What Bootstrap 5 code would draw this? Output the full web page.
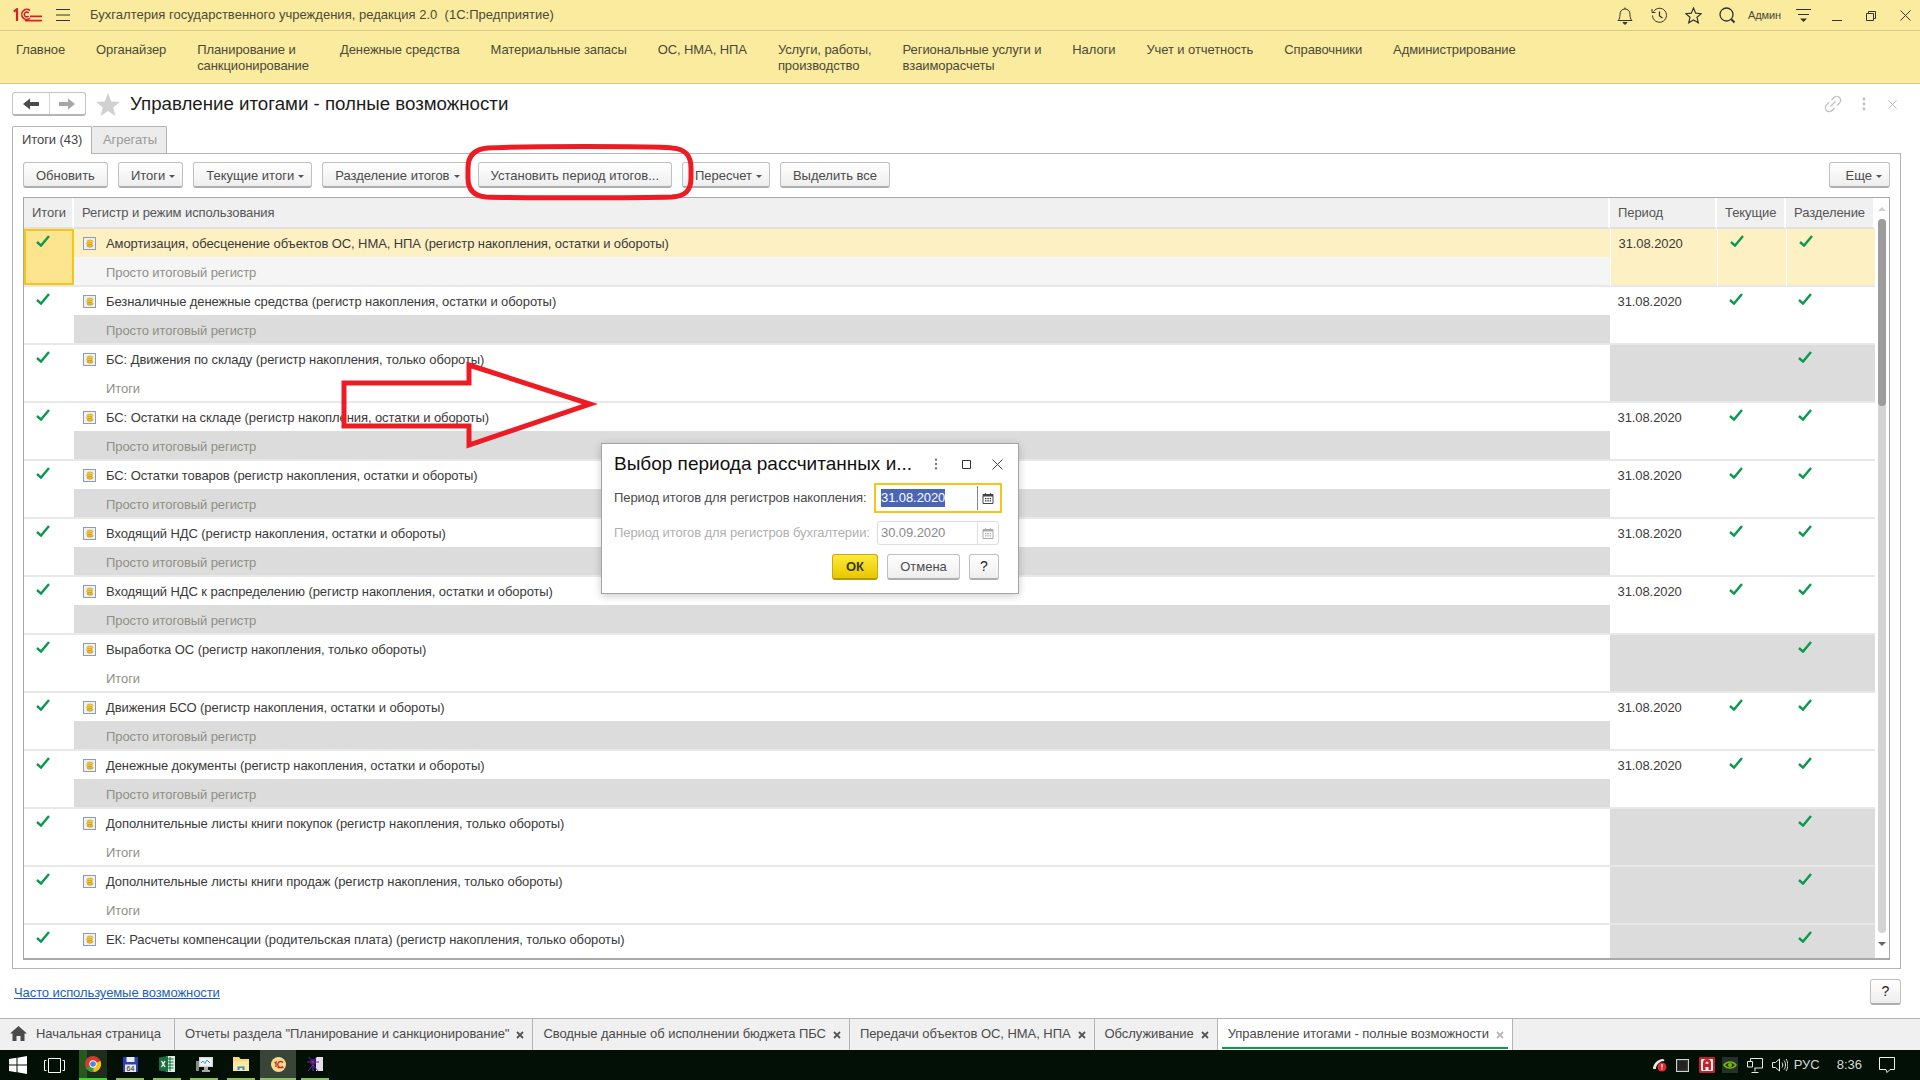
<!DOCTYPE html>
<html lang="ru">

<head>
    <meta charset="UTF-8">
    <meta name="viewport" content="width=device-width, initial-scale=1.0">
    <title>Управление итогами - полные возможности</title>
    <link href="https://cdn.jsdelivr.net/npm/bootstrap@5.3.0/dist/css/bootstrap.min.css" rel="stylesheet">
    <style>
        html, body { height: 100%; overflow: hidden; }
        body { font-family: "Liberation Sans", Arial, sans-serif; font-size: 13px; letter-spacing: -.085px; color: #4b4b4b; background: #fff; }
        .app { width: 1920px; height: 1080px; }

        /* top bars */
        .titlebar { height: 31px; background: #fbeb9e; border-bottom: 1px solid #d6c987; }
        .titlebar .logo { margin-left: 13px; }
        .titlebar .burger { margin-left: 14px; }
        .titlebar .app-name { margin-left: 20px; font-size: 13px; color: #4a4a3a; letter-spacing: .02px; white-space: pre; }
        .titlebar .tools { margin-right: -2px; }
        .titlebar .ico { width: 34px; }
        .titlebar .user { font-size: 11px; width: 36px; margin-right: 2px; color: #4a4a3a; }
        .mainmenu { height: 53px; background: #fbeb9e; border-bottom: 1px solid #d6c987; padding: 11px 0 0 16px; gap: 31px; line-height: 16px; color: #4a4a3a; }

        /* page head */
        .page { padding: 8px 19px 0 12px; }
        .page-head { height: 24px; }
        .navgroup { width: 74px; height: 24px; border: 1px solid #c4c4c4; border-bottom: 2px solid #b4b4b4; border-radius: 3px; }
        .navgroup > div { flex: 1 1 0; }
        .navgroup > div + div { border-left: 1px solid #d4d4d4; }
        .page-star { margin-left: 10px; }
        .page-title { font-size: 18.7px; letter-spacing: 0; color: #1c1c1c; margin-left: 10px; }
        .head-tools { gap: 20px; margin-right: 1px; }
        .head-tools .gap-link { margin-right: -2px; }
        .head-tools .gap-l { margin-left: 2px; }
        .head-tools .gap-r { margin-right: 3px; }

        /* tabs */
        .formtabs { height: 27px; margin-top: 10px; }
        .formtabs div { height: 28px; line-height: 26px; border: 1px solid #b4b4b4; border-bottom: 0; padding: 0 9px; border-radius: 2px 2px 0 0; position: relative; z-index: 1; white-space: nowrap; }
        .formtabs .on { background: #fff; width: 80px; color: #444; }
        .formtabs .off { background: #ececec; color: #9a9a9a; border-left: 0; padding-left: 11px; width: 75px; height: 27px; }

        .panel { width: 1889px; height: 816px; border: 1px solid #b4b4b4; padding: 8px 10px 9px; }
        .toolbar { height: 26px; gap: 10px; margin-bottom: 9px; }
        .btn-1c { height: 26px; padding: 1px 12px 0; font-size: 13px; line-height: 23px; color: #4b4b4b; border: 1px solid #c0c0c0; border-bottom: 2px solid #aeaeae; border-radius: 3px; background: linear-gradient(#ffffff, #eeeeee); white-space: nowrap; }
        .btn-1c.dropdown-toggle { padding-right: 7px; }
        .btn-1c.dropdown-toggle::after { border-top: 3px solid #555; border-right: 3px solid transparent; border-left: 3px solid transparent; border-bottom: 0; margin-left: 4px; vertical-align: 2px; }
        .toolbar .btn-more { padding-left: 16px; }
        .btn-help { width: 30px; padding: 0; font-size: 14px; color: #222; }
        .btn-ok { background: linear-gradient(#fdea3a, #e9c700); border-color: #c8ab10; border-bottom-color: #b49a08; color: #3c3c1e; font-weight: 700; padding: 0; width: 46px; }

        /* register list */
        .gridwrap { height: 763px; width: 1867px; border: 1px solid #a8a8a8; border-bottom-width: 2px; overflow: hidden; }
        .reg-table { width: 1851px; table-layout: fixed; border-collapse: separate; border-spacing: 0; }
        .reg-table>:not(caption)>*>* { padding: 0; border: 0; color: #3a3a3a; background: transparent; }
        .reg-table th.head { height: 31px; font-weight: 400; color: #555; background: #f0f0f0; padding: 0 8px; border-right: 2px solid #fff; border-bottom: 2px solid #e0e0e0; vertical-align: middle; }
        .reg-table td.name { height: 28px; padding: 1px 0 0 9px; vertical-align: middle; }
        .reg-table td.name svg { margin-right: 10px; vertical-align: -2px; }
        .reg-table td.sub { height: 30px; padding-left: 32px; color: #8f8f86; vertical-align: top; padding-top: 6px; border-bottom: 2px solid #e8e8e8; }
        .reg-table td.rs { vertical-align: top; border-bottom: 2px solid #e8e8e8; }
        .reg-table td.rs svg { display: block; }
        .reg-table td.date { padding: 5px 0 0 7.5px; }
        .reg-table td.mark { padding: 6px 0 0 12px; }
        .reg-table td.first { padding: 6px 0 0 12px; }
        .reg-table td.grey { background: #dcdcdc; }
        .reg-table tr.sel td.name, .reg-table tr.sel td.rs { background: #fdf1c3; }
        .reg-table tr.sel td.rs { border-left: 1px solid #fff; }
        .reg-table tr.sel td.first { background: #fde48f; border-left: 0; box-shadow: inset 0 0 0 2px #f8c514; }
        .reg-table tr.sel2 td.sub { background: #f5f5f5; }
        .vscroll { width: 14px; }
        .vscroll .up, .vscroll .down { height: 0; width: 0; margin-left: 3px; border-left: 4px solid transparent; border-right: 4px solid transparent; }
        .vscroll .up { margin-top: 9px; margin-bottom: 8px; border-bottom: 4px solid #cfcfcf; }
        .vscroll .down { margin-top: 9px; border-top: 4px solid #666; }
        .vscroll .track { width: 8px; margin-left: 3px; height: 714px; background: #d4d4d4; border-radius: 4px; }
        .vscroll .thumb { height: 187px; background: #9c9c9c; border-radius: 4px; }

        .foot { height: 37px; padding-top: 10px; }
        .foot a { color: #1a5fc0; margin-left: 2px; line-height: 20px; padding-top: 4px; }
        .foot .btn-help { width: 31px; }

        /* open windows */
        .opentabs { height: 32px; background: #f0f0f0; border-top: 1px solid #b4b4b4; letter-spacing: -.05px; }
        .opentabs .tab { height: 31px; line-height: 30px; padding: 0 8px 0 10px; border-right: 1px solid #b4b4b4; color: #4b4b4b; white-space: nowrap; }
        .opentabs .tab svg.x { margin-left: 7px; }
        .opentabs .home { padding-left: 10px; padding-right: 13px; }
        .opentabs .home svg { margin-right: 9px; vertical-align: -3px; }
        .opentabs .active { background: #fff; position: relative; }
        .opentabs .active::after { content: ""; position: absolute; left: 4px; right: 4px; bottom: 1px; height: 2px; background: #0b9a4e; }
        .opentabs .x-on { color: #555; }
        .opentabs .x-off { color: #b8b8b8; }

        /* windows taskbar */
        .taskbar { height: 30px; background: #021005; color: #d8d8d8; letter-spacing: 0; }
        .taskbar .start { width: 79px; }
        .taskbar .win { margin-left: 9px; }
        .taskbar .view { margin-left: 17px; }
        .taskbar .cell { width: 28px; height: 30px; margin-right: 9px; border-bottom: 2px solid #8fbf62; }
        .taskbar .cell.now { background: linear-gradient(90deg, #255a1e 8px, #1d2e1d 8px); border-bottom-color: #3fd62a; }
        .taskbar .cell.wide { width: 36px; margin-left: -4px; margin-right: 5px; background: #3a453a; }
        .taskbar .tray { font-size: 13px; margin-right: 25px; }
        .taskbar .tray > * { flex: none; }
        .tray .t-cloud { margin-right: 8px; }
        .tray .t-grid { margin-right: 10px; }
        .tray .t-av { margin-right: 7px; }
        .tray .t-nv { margin-right: 9px; }
        .tray .t-net { margin-right: 9px; }
        .tray .t-vol { margin-right: 6px; }
        .tray .t-lang { margin-right: 17px; }
        .tray .t-time { margin-right: 17px; }

        /* things that lie over the page */
        .marks { position: absolute; left: 0; top: 0; pointer-events: none; }
        .dlg { position: absolute; left: 601px; top: 443px; width: 418px; height: 151px; border: 1px solid #a4a4a4; border-radius: 0; box-shadow: 0 2px 8px rgba(0,0,0,.2); padding: 9px 16px 0 12px; }
        .dlg .dlg-title { font-size: 19px; letter-spacing: 0; height: 22px; line-height: 22px; color: #111; white-space: nowrap; }
        .dlg .dlg-tools { margin-right: -1px; }
        .dlg .t-max { margin-left: 24px; }
        .dlg .t-close { margin-left: 21px; }
        .dlg label { flex: none; width: 260px; margin: 8px 0 0; white-space: nowrap; }
        .field { background: #fff; font-size: 13px; white-space: nowrap; }
        .field .picked, .field .plain { flex: none; width: 64px; }
        .field svg { flex: none; }
        .field.f1 { flex: none; width: 128px; height: 30px; border: 2px solid #f8c514; padding-left: 5px; margin-top: 8px; }
        .field.f1 .picked { background: #4a64b8; color: #fff; line-height: 18px; }
        .field.f1 .sep { width: 1px; height: 24px; background: #888; margin-left: 32px; margin-right: 4px; }
        .field.f1 svg { color: #444; }
        .field.f2 { flex: none; width: 122px; height: 24px; border: 1px solid #dcdcdc; border-radius: 3px; padding-left: 3px; color: #8a8a8a; margin-left: 3px; margin-top: 8px; }
        .field.f2 .sep { width: 1px; height: 22px; background: #e0e0e0; margin-left: 32px; margin-right: 4px; }
        .field.f2 svg { color: #aaa; }
        .off-label { color: #b0b0b0; }
        .dlg-btns { margin-top: 9px; gap: 9px; padding-right: 3px; }
        .dlg .btn-cancel { width: 73px; padding: 0; }
    </style>
</head>

<body>
    <svg width="0" height="0" class="position-absolute">
        <defs>
            <symbol id="i-check" viewBox="0 0 14 12"><path d="M1 7l4 3.6L13 1" fill="none" stroke="#0a9a4f" stroke-width="2.4"/></symbol>
            <symbol id="i-reg" viewBox="0 0 13 13">
                <rect x=".5" y=".5" width="12" height="12" fill="#eef2f7" stroke="#8d9db2"/>
                <ellipse cx="7" cy="4.4" rx="3" ry="1.4" fill="#f6cf3a" stroke="#c79a1c" stroke-width=".6"/>
                <ellipse cx="6.4" cy="6.6" rx="3" ry="1.4" fill="#f3c62e" stroke="#c79a1c" stroke-width=".6"/>
                <ellipse cx="7" cy="8.8" rx="3" ry="1.4" fill="#eeb925" stroke="#b98c16" stroke-width=".6"/>
            </symbol>
            <symbol id="i-x" viewBox="0 0 8 8"><path d="M1 1l6 6M7 1L1 7" stroke="currentColor" stroke-width="1.8" fill="none"/></symbol>
            <symbol id="i-cal" viewBox="0 0 12 12">
                <path d="M1 2.5h10v9H1z" fill="none" stroke="currentColor"/><path d="M1 2h10v2.5H1z" fill="currentColor"/>
                <path d="M3 6h1.5v1.3H3zM5.3 6h1.5v1.3H5.3zM7.6 6h1.5v1.3H7.6zM3 8.3h1.5v1.3H3zM5.3 8.3h1.5v1.3H5.3zM7.6 8.3h1.5v1.3H7.6z" fill="currentColor"/>
                <path d="M3.5 1v2M8.5 1v2" stroke="currentColor"/>
            </symbol>
            <symbol id="i-dots" viewBox="0 0 4 14"><circle cx="2" cy="2" r="1.4"/><circle cx="2" cy="7" r="1.4"/><circle cx="2" cy="12" r="1.4"/></symbol>
        </defs>
    </svg>

    <div class="app d-flex flex-column position-relative">
        <!-- title bar -->
        <div class="titlebar d-flex align-items-center">
            <svg class="logo" width="29" height="14" viewBox="0 0 29 14" fill="none" stroke="#d5202a">
                <path d="M.8 3.6L4 1.2V13" stroke-width="2.2"/>
                <path d="M17 2.6a5 5 0 1 0 0 7.6M15.6 5a2.4 2.4 0 1 0 0 3" stroke-width="1.6"/>
                <path d="M12 12.6h17M17 8.4h12" stroke-width="1.7"/>
            </svg>
            <svg class="burger" width="14" height="12" viewBox="0 0 14 12" stroke="#333"><path d="M0 .5h14M0 6h14M0 11.5h14"/></svg>
            <span class="app-name">Бухгалтерия государственного учреждения, редакция 2.0  (1С:Предприятие)</span>
            <div class="tools ms-auto d-flex align-items-center">
                <div class="ico text-center"><svg width="16" height="18" viewBox="0 0 16 18" fill="none" stroke="#333"><path d="M1 13.5h14c-1.500-1.500-2-3-2-6 0-3.500-2-5.500-5-5.500S3 4 3 7.500c0 3-.5 4.500-2 6zM8 .5V2"/><path d="M6 15.500h4l-2 2z" fill="#333"/></svg></div>
                <div class="ico text-center"><svg width="17" height="17" viewBox="0 0 17 17" fill="none" stroke="#333"><path d="M2.600 4.500A7 7 0 1 1 1.500 8.500"/><path d="M1 2v3.500h3.500" /><path d="M8.500 4.500v4.500l3 2" stroke-width="1.300"/></svg></div>
                <div class="ico text-center"><svg width="17" height="17" viewBox="0 0 17 17" fill="none" stroke="#333" stroke-width="1.200"><path d="M8.500 1l2.200 5.200 5.500.5-4.200 3.600 1.300 5.500-4.800-2.900-4.800 2.900 1.300-5.500L.8 6.700l5.500-.5z"/></svg></div>
                <div class="ico text-center"><svg width="17" height="17" viewBox="0 0 17 17" fill="none" stroke="#333" stroke-width="1.300"><circle cx="7.500" cy="7.500" r="6.500"/><path d="M12 12l3.500 3.500" stroke-width="2"/></svg></div>
                <div class="user ms-1">Админ</div>
                <div class="ico text-center"><svg width="15" height="14" viewBox="0 0 15 14" stroke="#333"><path d="M0 .5h15M2 5.500h11"/><path d="M4 9.500h7l-3.500 3.500z" fill="#333" stroke="none"/></svg></div>
                <div class="ico text-center"><svg width="10" height="10" viewBox="0 0 10 10" stroke="#333"><path d="M0 9.500h10"/></svg></div>
                <div class="ico text-center"><svg width="10" height="10" viewBox="0 0 10 10" fill="none" stroke="#333"><path d="M.5 2.500h7v7h-7zM2.500 2.500v-2h7v7h-2"/></svg></div>
                <div class="ico text-center"><svg width="11" height="11" viewBox="0 0 11 11" stroke="#333"><path d="M.5.5l10 10M10.500.5l-10 10"/></svg></div>
            </div>
        </div>

        <!-- sections -->
        <nav class="mainmenu d-flex" id="mainMenu"></nav>

        <!-- form -->
        <main class="page flex-grow-1">
            <div class="page-head d-flex align-items-center">
                <div class="navgroup d-flex">
                    <div class="d-flex align-items-center justify-content-center"><svg width="16" height="12" viewBox="0 0 16 12" fill="#4b4b4b"><path d="M0 6l7-5.500V4h9v4H7v3.500z"/></svg></div>
                    <div class="d-flex align-items-center justify-content-center"><svg width="16" height="12" viewBox="0 0 16 12" fill="#a6a6a6"><path d="M16 6L9 .5V4H0v4h9v3.500z"/></svg></div>
                </div>
                <svg class="page-star" width="24" height="23" viewBox="0 0 24 23" fill="#d0d0d0"><path d="M12 0l3.300 8.400 8.700.5-6.800 5.500 2.300 8.600L12 18.100 4.500 23l2.300-8.600L0 8.900l8.700-.5z"/></svg>
                <div class="page-title">Управление итогами - полные возможности</div>
                <div class="head-tools ms-auto d-flex align-items-center">
                    <svg class="gap-link" width="18" height="18" viewBox="0 0 18 18" fill="none" stroke="#c0c0c0" stroke-width="1.300"><path d="M7.500 5L10 2.500a3 3 0 0 1 5.500 5.500L13 10.500M10.500 13L8 15.500A3 3 0 0 1 2.500 10L5 7.500M6.500 11.500l5-5"/></svg>
                    <svg class="gap-l" width="4" height="14" fill="#bdbdbd"><use href="#i-dots"/></svg>
                    <svg class="gap-l gap-r" width="9" height="9" viewBox="0 0 9 9" stroke="#b4b4b4"><path d="M.5.5l8 8M8.500.5l-8 8"/></svg>
                </div>
            </div>

            <div class="formtabs d-flex">
                <div class="on">Итоги (43)</div>
                <div class="off">Агрегаты</div>
            </div>

            <div class="panel">
                <div class="toolbar d-flex">
                    <button class="btn btn-1c">Обновить</button>
                    <button class="btn btn-1c dropdown-toggle">Итоги</button>
                    <button class="btn btn-1c dropdown-toggle">Текущие итоги</button>
                    <button class="btn btn-1c dropdown-toggle">Разделение итогов</button>
                    <button class="btn btn-1c">Установить период итогов...</button>
                    <button class="btn btn-1c dropdown-toggle">Пересчет</button>
                    <button class="btn btn-1c">Выделить все</button>
                    <button class="btn btn-1c btn-more dropdown-toggle ms-auto">Еще</button>
                </div>

                <div class="gridwrap d-flex">
                    <div class="flex-shrink-0">
                        <table class="table mb-0 reg-table">
                            <colgroup><col width="50"><col width="1536"><col width="107"><col width="69"><col width="89"></colgroup>
                            <thead>
                                <tr>
                                    <th class="head">Итоги</th>
                                    <th class="head">Регистр и режим использования</th>
                                    <th class="head">Период</th>
                                    <th class="head">Текущие</th>
                                    <th class="head">Разделение</th>
                                </tr>
                            </thead>
                            <tbody id="regRows"></tbody>
                        </table>
                    </div>
                    <div class="vscroll flex-shrink-0">
                        <div class="up"></div>
                        <div class="track"><div class="thumb"></div></div>
                        <div class="down"></div>
                    </div>
                </div>
            </div>

            <div class="foot d-flex align-items-start justify-content-between">
                <a href="#">Часто используемые возможности</a>
                <button class="btn btn-1c btn-help">?</button>
            </div>
        </main>

        <!-- open windows -->
        <div class="opentabs d-flex" id="openTabs"></div>

        <!-- taskbar -->
        <div class="taskbar d-flex align-items-center">
            <div class="start d-flex align-items-center">
                <svg class="win" width="18" height="18" viewBox="0 0 18 18" fill="#fff"><path d="M0 3l7.500-1.200V8.500H0zM8.500 1.700L18 0v8.500H8.500zM0 9.500h7.500v6.700L0 15zM8.500 9.500H18V18l-9.500-1.700z"/></svg>
                <svg class="view" width="21" height="15" viewBox="0 0 21 15" fill="none" stroke="#fff"><path d="M4.500.5h12v14h-12zM2.500 2.500h-2v10h2M18.500 2.500h2v10h-2"/></svg>
            </div>
            <div class="cell now d-flex align-items-center justify-content-center">
                <svg width="16" height="16" viewBox="0 0 16 16"><circle cx="8" cy="8" r="8" fill="#d8392c"/><path d="M8 8L1 12a8 8 0 0 0 7.500 4z" fill="#2e9e47"/><path d="M8 8l7.500-3A8 8 0 0 1 8.500 16z" fill="#f4c20d"/><circle cx="8" cy="8" r="3.700" fill="#fff"/><circle cx="8" cy="8" r="2.800" fill="#4a86e8"/></svg>
            </div>
            <div class="cell d-flex align-items-center justify-content-center">
                <svg width="15" height="15" viewBox="0 0 15 15"><path d="M0 0h15v15H0z" fill="#2c3fb4"/><path d="M3.500 0h8v5h-8z" fill="#e8eaf6"/><path d="M2 7.500h11V15H2z" fill="#e8e8e8"/><text x="7.500" y="14" font-size="7" font-family="Liberation Sans" text-anchor="middle" fill="#222">64</text></svg>
            </div>
            <div class="cell d-flex align-items-center justify-content-center">
                <svg width="16" height="16" viewBox="0 0 16 16"><path d="M7 0h9v16H7z" fill="#d9eee0"/><path d="M8.500 3h6M8.500 6h6M8.500 9h6M8.500 12h6M11 1v14" stroke="#1d6f42"/><path d="M0 1.500L9 0v16L0 14.500z" fill="#1d6f42"/><path d="M2.500 5l3.500 6M6 5l-3.500 6" stroke="#fff" stroke-width="1.300"/></svg>
            </div>
            <div class="cell d-flex align-items-center justify-content-center">
                <svg width="17" height="15" viewBox="0 0 17 15"><path d="M3 0h14v10H3z" fill="#d6dbe0"/><path d="M4.500 1.500h11v7h-11z" fill="#f4f6f8"/><path d="M5 6l2-2 2 2.500L11 3l3 3" fill="none" stroke="#3a9ad9"/><path d="M8 10h4v3h2v2H6v-2h2z" fill="#a8a8a8"/><path d="M0 4h3v10H0z" fill="#8c8c8c"/></svg>
            </div>
            <div class="cell d-flex align-items-center justify-content-center">
                <svg width="16" height="14" viewBox="0 0 16 14"><path d="M0 0h6l1.500 2H16v12H0z" fill="#f6d97a"/><path d="M0 4h16v10H0z" fill="#fbe7a0"/><path d="M4.500 13V9.500h7V13h-2v-2h-3v2z" fill="#2b8fd6"/></svg>
            </div>
            <div class="cell wide d-flex align-items-center justify-content-center">
                <svg width="15" height="15" viewBox="0 0 15 15"><circle cx="7.500" cy="7.500" r="7.500" fill="#f4dc8c"/><path d="M3.500 6l1.500-1v5M12 5.500a3 3 0 1 0 0 4M6.500 10.500h6" fill="none" stroke="#d5202a" stroke-width="1.300"/></svg>
            </div>
            <div class="cell d-flex align-items-center justify-content-center">
                <svg width="16" height="16" viewBox="0 0 16 16" fill="none"><path d="M9 1h7v14H9z" fill="#e7e0e8"/><circle cx="6" cy="6" r="3" fill="#4a1d8c"/><circle cx="6" cy="6" r="1" fill="#d5202a"/><path d="M6 9l-5 6M6 9l0 6M6 9l5 6M3 6H0M9 6h3M4 3.500L1.500 1M8 3.500L9.500 1" stroke="#6a2fc4"/></svg>
            </div>
            <div class="tray ms-auto d-flex align-items-center">
                <svg class="t-cloud" width="16" height="14" viewBox="0 0 16 14"><path d="M1 11C1 6 5 2 10 1c3 0 3 3 1 2C7 4 4 7 4 11z" fill="#e6e6e6"/><circle cx="10" cy="9" r="4.500" fill="#e5252b"/><path d="M10 6v3.500M10 10.500v1" stroke="#fff" stroke-width="1.300"/></svg>
                <svg class="t-grid" width="13" height="13" viewBox="0 0 13 13"><rect x=".5" y=".5" width="12" height="12" fill="#3a3a3a" stroke="#d0d0d0"/><path d="M3 2v9M5 2v9M7 2v9M9 2v9M2 3h9M2 5h9M2 7h9M2 9h9" stroke="#1a1a1a"/></svg>
                <svg class="t-av" width="16" height="16" viewBox="0 0 16 16"><rect width="16" height="16" rx="1" fill="#c4202a"/><rect x="2" y="2" width="12" height="12" fill="#f4f4f4" rx="1"/><path d="M4 13V6a4 4 0 0 1 8 0v7H9.500v-3h-3v3zM6.500 6.800h3V6a1.500 1.500 0 0 0-3 0z" fill="#c4202a"/></svg>
                <svg class="t-nv" width="16" height="16" viewBox="0 0 16 16"><rect width="16" height="16" fill="#26302a"/><path d="M2 8c3-4 9-4 12 0-3 4-9 4-12 0z" fill="none" stroke="#76b900" stroke-width="1.500"/><circle cx="8" cy="8" r="2" fill="#76b900"/></svg>
                <svg class="t-net" width="16" height="15" viewBox="0 0 16 15" fill="none" stroke="#eaeaea"><path d="M3.500 3V.5h12V10h-8M.5 3.500h5V9h-5zM8 10v3.500M4.500 14.500h7"/></svg>
                <svg class="t-vol" width="16" height="14" viewBox="0 0 16 14" fill="none" stroke="#eaeaea"><path d="M.5 4.500h3l4-3.500v12l-4-3.500h-3zM10 4.500c1 1.500 1 3.500 0 5M12 2.500c2 2.500 2 6.500 0 9M14 1c2.500 3.500 2.500 8.500 0 12"/></svg>
                <span class="t-lang">РУС</span>
                <span class="t-time">8:36</span>
                <svg width="16" height="16" viewBox="0 0 16 16" fill="none" stroke="#f2f2f2"><path d="M.5.5h15v12h-4.500l-3 3-1-3H.5z"/></svg>
            </div>
        </div>

        <!-- drawn over the screenshot: oval and arrow -->
        <svg class="marks" width="1920" height="1080" fill="none" stroke="#ed1c24" stroke-width="5">
            <path d="M488 148C520 146 660 146 672 148 686 149 691 156 691 168V178C691 190 686 196 672 197 640 198 510 198 486 197 474 196 468 190 468 178V168C468 156 474 149 488 148z"/>
            <path d="M344 383H469V365L590 404 469 445V426H344z"/>
        </svg>

        <!-- period dialog -->
        <div class="card dlg">
            <div class="d-flex align-items-center">
                <div class="dlg-title">Выбор периода рассчитанных и...</div>
                <div class="dlg-tools ms-auto d-flex align-items-center">
                    <svg width="4" height="12" viewBox="0 0 4 14" fill="#777"><use href="#i-dots"/></svg>
                    <svg class="t-max" width="9" height="9" viewBox="0 0 9 9" fill="none" stroke="#333"><path d="M.5.5h8v8h-8z"/></svg>
                    <svg class="t-close" width="11" height="11" viewBox="0 0 11 11" stroke="#444"><path d="M.5.5l10 10M10.500.5l-10 10"/></svg>
                </div>
            </div>
            <div class="d-flex align-items-center">
                <label>Период итогов для регистров накопления:</label>
                <div class="field f1 d-flex align-items-center">
                    <span class="picked">31.08.2020</span>
                    <span class="sep"></span>
                    <svg width="12" height="12"><use href="#i-cal"/></svg>
                </div>
            </div>
            <div class="d-flex align-items-center">
                <label class="off-label">Период итогов для регистров бухгалтерии:</label>
                <div class="field f2 d-flex align-items-center">
                    <span class="plain">30.09.2020</span>
                    <span class="sep"></span>
                    <svg width="12" height="12"><use href="#i-cal"/></svg>
                </div>
            </div>
            <div class="dlg-btns d-flex justify-content-end">
                <button class="btn btn-1c btn-ok">ОК</button>
                <button class="btn btn-1c btn-cancel">Отмена</button>
                <button class="btn btn-1c btn-help">?</button>
            </div>
        </div>
    </div>

    <script src="https://cdn.jsdelivr.net/npm/bootstrap@5.3.0/dist/js/bootstrap.bundle.min.js"></script>
    <script>
        var menu = ['Главное', 'Органайзер', 'Планирование и<br>санкционирование', 'Денежные средства', 'Материальные запасы', 'ОС, НМА, НПА',
            'Услуги, работы,<br>производство', 'Региональные услуги и<br>взаиморасчеты', 'Налоги', 'Учет и отчетность', 'Справочники', 'Администрирование'];
        document.getElementById('mainMenu').innerHTML = menu.map(m => `<div>${m}</div>`).join('');

        var accum = '(регистр накопления, остатки и обороты)';
        var turn = '(регистр накопления, только обороты)';
        var rows = [
            'Амортизация, обесценение объектов ОС, НМА, НПА ' + accum,
            'Безналичные денежные средства ' + accum,
            'БС: Движения по складу ' + turn,
            'БС: Остатки на складе ' + accum,
            'БС: Остатки товаров ' + accum,
            'Входящий НДС ' + accum,
            'Входящий НДС к распределению ' + accum,
            'Выработка ОС ' + turn,
            'Движения БСО ' + accum,
            'Денежные документы ' + accum,
            'Дополнительные листы книги покупок ' + turn,
            'Дополнительные листы книги продаж ' + turn,
            'ЕК: Расчеты компенсации (родительская плата) ' + turn
        ];
        var check = '<svg width="14" height="12"><use href="#i-check"/></svg>';
        var html = '';
        rows.forEach((name, i) => {
            var onlyTurn = name.indexOf('только обороты') > -1;
            var grey = onlyTurn ? ' grey' : '';
            // the last row is scrolled off halfway, its second line is not visible
            var sub = i == rows.length - 1 ? '' : (onlyTurn ? 'Итоги' : 'Просто итоговый регистр');
            html += `<tr class="${i == 0 ? 'sel' : ''}">
                <td rowspan="2" class="rs first">${check}</td>
                <td class="name"><svg width="13" height="13"><use href="#i-reg"/></svg>${name}</td>
                <td rowspan="2" class="rs date${grey}">${onlyTurn ? '' : '31.08.2020'}</td>
                <td rowspan="2" class="rs mark${grey}">${onlyTurn ? '' : check}</td>
                <td rowspan="2" class="rs mark${grey}">${check}</td>
            </tr>
            <tr class="${i == 0 ? 'sel2' : ''}">
                <td class="sub${onlyTurn || i == 0 ? '' : ' grey'}">${sub}</td>
            </tr>`;
        });
        document.getElementById('regRows').innerHTML = html;

        var tabs = ['Отчеты раздела "Планирование и санкционирование"', 'Сводные данные об исполнении бюджета ПБС', 'Передачи объектов ОС, НМА, НПА', 'Обслуживание', 'Управление итогами - полные возможности'];
        var tabHtml = `<div class="tab home"><svg width="17" height="15" viewBox="0 0 17 15" fill="#4b4b4b"><path d="M8.500 0L17 7.500h-2.500V15h-4v-5h-4v5h-4V7.500H0z"/></svg>Начальная страница</div>`;
        tabs.forEach((t, i) => {
            var last = i == tabs.length - 1;
            tabHtml += `<div class="tab${last ? ' active' : ''}">${t}<svg class="x ${last ? 'x-off' : 'x-on'}" width="8" height="8"><use href="#i-x"/></svg></div>`;
        });
        document.getElementById('openTabs').innerHTML = tabHtml;
    </script>
</body>

</html>
